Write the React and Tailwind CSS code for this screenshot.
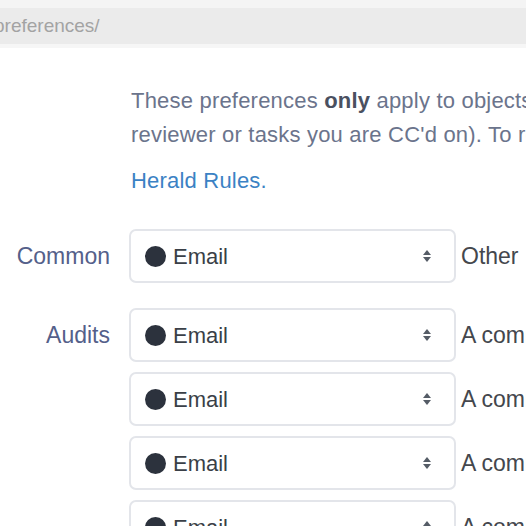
import React from "react";

function Arrows() {
  return (
    <svg width="10" height="16" viewBox="0 0 10 16" className="shrink-0">
      <path d="M1 7 L5 2 L9 7 Z" fill="#555c66" />
      <path d="M1 9 L5 14 L9 9 Z" fill="#555c66" />
    </svg>
  );
}

function Select() {
  return (
    <div className="w-[327px] h-[54px] shrink-0 rounded-[7px] border-2 border-[#e3e5ea] bg-white flex items-center pl-[14px] pr-[22px]">
      <span className="w-[21px] h-[21px] rounded-full bg-[#2c323d] shrink-0" />
      <span className="ml-[7px] text-[22px] text-[#3a3f47]">Email</span>
      <span className="ml-auto">
        <Arrows />
      </span>
    </div>
  );
}

function Row({ label, note }) {
  return (
    <div className="flex items-center">
      <div className="w-[110px] text-right text-[23px] text-[#54608a] shrink-0">
        {label}
      </div>
      <div className="w-[19px] shrink-0" />
      <Select />
      <div className="ml-[5px] whitespace-nowrap text-[23px] text-[#44474d]">
        {note}
      </div>
    </div>
  );
}

export default function App() {
  return (
    <div
      className="w-[526px] h-[526px] overflow-hidden bg-white"
      style={{ fontFamily: '"Liberation Sans", Arial, sans-serif' }}
    >
      <div className="h-[8px] bg-[#f4f4f4]" />
      <div className="h-[36px] bg-[#ebebeb] flex items-center text-[19px] text-[#a3a3a3] whitespace-nowrap -ml-[6px]">
        preferences/
      </div>
      <div className="h-[4px] bg-[#f6f6f6]" />

      <div className="pl-[131px] pt-[36px] text-[22px] tracking-[0.2px] text-[#6b748c] whitespace-nowrap leading-[34px]">
        <div>
          These preferences <b className="text-[#4a5060]">only</b> apply to
          objects you are directly involved with (for example, revisions where
          you are the author or
        </div>
        <div>
          reviewer or tasks you are CC'd on). To receive email alerts when other
          objects are created, configure
        </div>
        <div className="mt-[12px] text-[#3b82c4]">Herald Rules.</div>
      </div>

      <div className="mt-[31px] flex flex-col">
        <Row label="Common" note="Other" />
        <div className="mt-[25px]">
          <Row label="Audits" note="A commit you authored" />
        </div>
        <div className="mt-[10px]">
          <Row label="" note="A commit you are auditing" />
        </div>
        <div className="mt-[10px]">
          <Row label="" note="A commit you authored" />
        </div>
        <div className="mt-[10px]">
          <Row label="" note="A commit you are auditing" />
        </div>
      </div>
    </div>
  );
}
